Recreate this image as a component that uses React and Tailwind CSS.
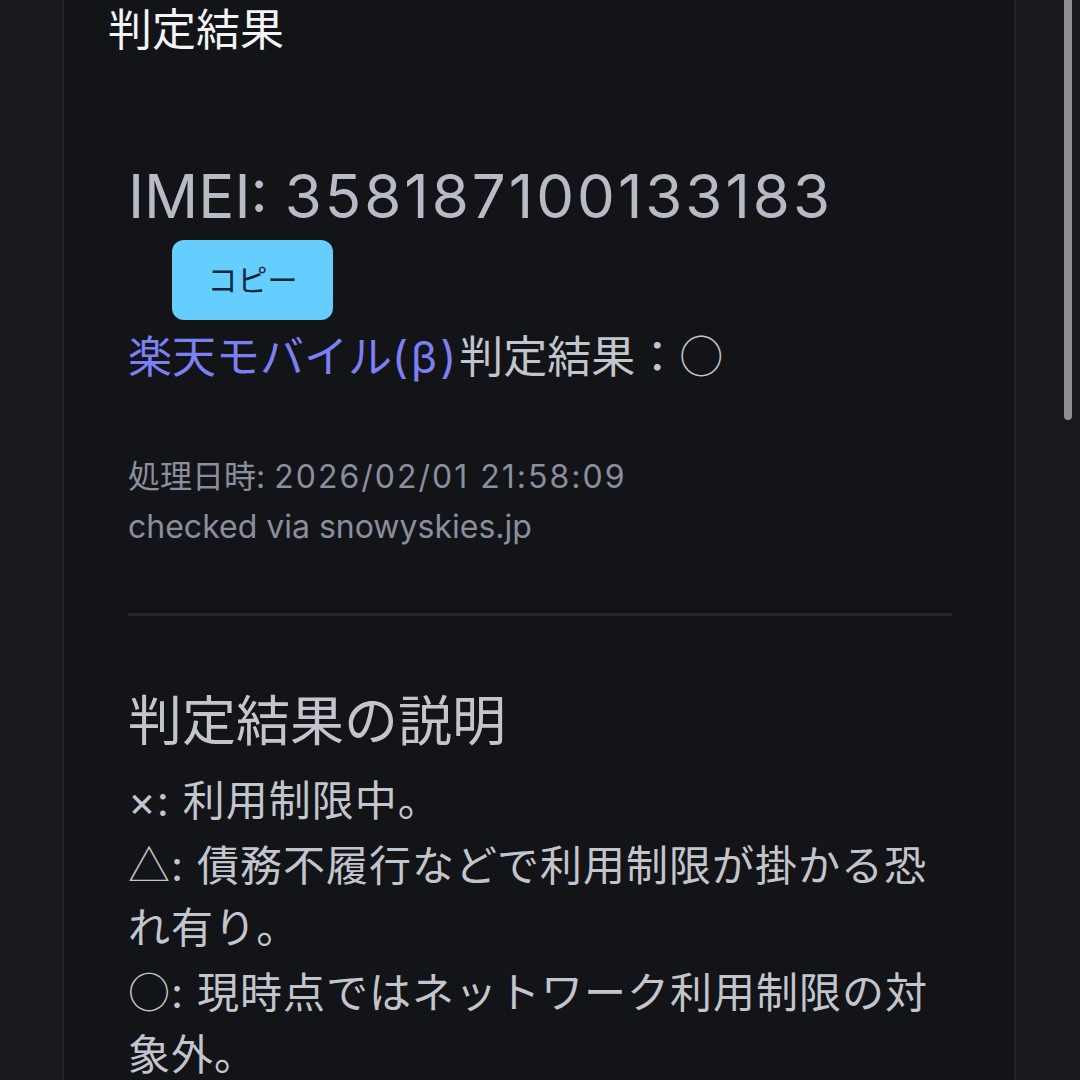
import React from "react";

const font = { fontFamily: 'Inter, "Noto Sans CJK JP", sans-serif' };

function Sym({ children }) {
  return <span className="font-['Noto_Sans_CJK_JP',sans-serif] font-light">{children}</span>;
}

export default function App() {
  return (
    <div
      className="relative w-[1080px] h-[1080px] overflow-hidden bg-[#18191d] flex"
      style={font}
    >
      <div className="w-[62px] shrink-0" />
      <div className="w-[954px] shrink-0 bg-[#131418] border-x-2 border-[#222328] flex flex-col">
        <div className="pl-[44px] pt-[4px] text-[44px] leading-[52px] text-[#f4f4f6]">
          判定結果
        </div>
        <div className="pl-[64px] pr-[62px] pt-[104px] flex flex-col">
          <div className="text-[60px] leading-[72px] text-[#b8bbc6]">
            IMEI: <span className="tracking-[3px]">358187100133183</span>
          </div>
          <div className="pl-[44px] mt-[8px]">
            <button className="w-[161px] h-[80px] rounded-[12px] bg-[#66cdff] text-[30px] text-[#10273a] flex items-center justify-center">
              コピー
            </button>
          </div>
          <div className="text-[44px] leading-[58px] mt-[5px]">
            <span className="text-[#7b80f2]">
              楽天モバイル<span className="tracking-[3px]">(β)</span>
            </span>
            <span className="text-[#c3c5cd]">
              判定結果：<Sym>○</Sym>
            </span>
          </div>
          <div className="mt-[66px] text-[32px] leading-[50px] text-[#8a8e9d]">
            <div>
              処理日時: <span className="tracking-[2px]">2026/02/01 21:58:09</span>
            </div>
            <div>checked via snowyskies.jp</div>
          </div>
          <div className="mt-[61px] h-[3px] bg-[#26272d]" />
          <div className="mt-[74px] text-[54px] leading-[64px] text-[#c3c5cd]">
            判定結果の説明
          </div>
          <div className="mt-[16px] text-[42px] leading-[62px] tracking-[1px] text-[#c3c5cd] whitespace-nowrap">
            <div>×: 利用制限中。</div>
            <div>
              <Sym>△</Sym>: 債務不履行などで利用制限が掛かる恐
            </div>
            <div>れ有り。</div>
            <div>
              <Sym>○</Sym>: 現時点ではネットワーク利用制限の対
            </div>
            <div>象外。</div>
          </div>
        </div>
      </div>
      <div className="absolute left-[1064px] top-0 w-[8px] h-[420px] rounded-b-full bg-[#8e8f94]" />
    </div>
  );
}
